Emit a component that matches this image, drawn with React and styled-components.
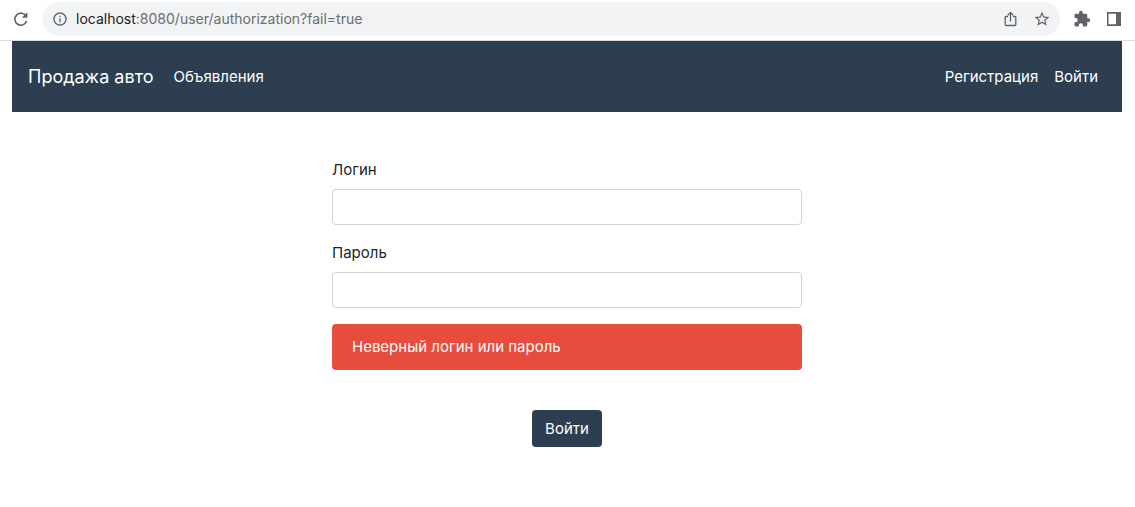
import React from "react";
import styled, { createGlobalStyle } from "styled-components";
import { MdInfoOutline, MdStarBorder, MdExtension } from "react-icons/md";

const GlobalStyle = createGlobalStyle`
  *, *::before, *::after { box-sizing: border-box; }
  body {
    margin: 0;
    background: #fff;
    color: #212529;
    font: 15px/23px Inter, "Noto Sans", sans-serif;
  }
`;

const BrowserBar = styled.div`
  display: flex;
  align-items: center;
  height: 41px;
  padding: 0 12px 2px;
  border-bottom: 1px solid #dcdde0;
  color: #5f6368;
`;

const IconButton = styled.button`
  display: flex;
  flex: none;
  padding: 0;
  border: 0;
  background: none;
  color: inherit;
`;

const AddressBox = styled.div`
  display: flex;
  flex: 1;
  align-items: center;
  min-width: 0;
  height: 34px;
  margin: 0 13px 0 12px;
  padding: 0 9px 0 10px;
  gap: 8px;
  border-radius: 17px;
  background: #f1f3f4;
`;

const Address = styled.div`
  flex: 1;
  min-width: 0;
  font: 14px/20px Inter, sans-serif;
  color: #6b6e72;
`;

const Host = styled.span`
  color: #202124;
`;

const AddressActions = styled.div`
  display: flex;
  align-items: center;
  gap: 14px;
`;

const Extensions = styled.div`
  display: flex;
  align-items: center;
  gap: 14px;
`;

const Page = styled.div`
  padding: 0 13px 0 12px;
`;

const Navbar = styled.nav`
  display: flex;
  align-items: center;
  height: 71px;
  padding: 0 24px 0 16px;
  background: #2c3e50;
`;

const Brand = styled.a`
  margin-right: 20px;
  color: #fff;
  font-size: 18px;
  line-height: 28px;
  text-decoration: none;
`;

const NavLinks = styled.div`
  display: flex;
  flex: 1;
  gap: 16px;
  justify-content: ${(p) => (p.$end ? "flex-end" : "flex-start")};
`;

const NavLink = styled.a`
  color: #fff;
  text-decoration: none;
`;

const Form = styled.form`
  display: flex;
  flex-direction: column;
  gap: 16px;
  width: 100%;
  max-width: 470px;
  margin: 46px auto 0;
`;

const Field = styled.div`
  display: flex;
  flex-direction: column;
  gap: 8px;
`;

const Input = styled.input`
  width: 100%;
  height: 36px;
  padding: 6px 12px;
  border: 1px solid #ced4da;
  border-radius: 4px;
  background: #fff;
  font: inherit;
`;

const Alert = styled.div`
  padding: 12px 20px;
  border-radius: 4px;
  background: #e74c3c;
  color: #fff;
  line-height: 22px;
`;

const Submit = styled.button`
  align-self: center;
  height: 37px;
  margin-top: 24px;
  padding: 0 13px;
  border: 0;
  border-radius: 4px;
  background: #2c3e50;
  color: #fff;
  font: inherit;
`;

function ReloadIcon() {
  return (
    <svg width="18" height="18" viewBox="0 0 18 18" aria-hidden="true">
      <path d="M14.1 6.2A6 6 0 1 0 14.6 11" fill="none" stroke="currentColor" strokeWidth="1.6" />
      <path d="M15.4 2.2v5.6H9.8z" fill="currentColor" />
    </svg>
  );
}

function ShareIcon() {
  return (
    <svg width="18" height="18" viewBox="0 0 18 18" fill="none" stroke="currentColor" strokeWidth="1.3" strokeLinejoin="round" aria-hidden="true">
      <path d="M7 6.5H5a.8.8 0 0 0-.8.8v7.4a.8.8 0 0 0 .8.8h9a.8.8 0 0 0 .8-.8V7.300a.8.8 0 0 0-.8-.8h-2M9.500 11.500V2.500M6.800 5.200L9.500 2.400l2.700 2.800" />
    </svg>
  );
}

function PanelIcon() {
  return (
    <svg width="18" height="18" viewBox="0 0 18 18" aria-hidden="true">
      <path fill="currentColor" fillRule="evenodd" d="M2 2h14v14H2zM3.5 3.7v10.6H11V3.7z" />
    </svg>
  );
}

export default function App() {
  return (
    <>
      <GlobalStyle />
      <BrowserBar>
        <IconButton aria-label="Reload"><ReloadIcon /></IconButton>
        <AddressBox>
          <IconButton aria-label="Site information"><MdInfoOutline size={16} /></IconButton>
          <Address><Host>localhost</Host>:8080/user/authorization?fail=true</Address>
          <AddressActions>
            <IconButton aria-label="Share"><ShareIcon /></IconButton>
            <IconButton aria-label="Bookmark"><MdStarBorder size={18} /></IconButton>
          </AddressActions>
        </AddressBox>
        <Extensions>
          <IconButton aria-label="Extensions"><MdExtension size={18} /></IconButton>
          <IconButton aria-label="Side panel"><PanelIcon /></IconButton>
        </Extensions>
      </BrowserBar>
      <Page>
        <Navbar>
          <Brand href="#">Продажа авто</Brand>
          <NavLinks>
            <NavLink href="#">Объявления</NavLink>
          </NavLinks>
          <NavLinks $end>
            <NavLink href="#">Регистрация</NavLink>
            <NavLink href="#">Войти</NavLink>
          </NavLinks>
        </Navbar>
        <Form onSubmit={(e) => e.preventDefault()}>
          <Field>
            <label htmlFor="login">Логин</label>
            <Input id="login" type="text" />
          </Field>
          <Field>
            <label htmlFor="password">Пароль</label>
            <Input id="password" type="password" />
          </Field>
          <Alert role="alert">Неверный логин или пароль</Alert>
          <Submit type="submit">Войти</Submit>
        </Form>
      </Page>
    </>
  );
}
